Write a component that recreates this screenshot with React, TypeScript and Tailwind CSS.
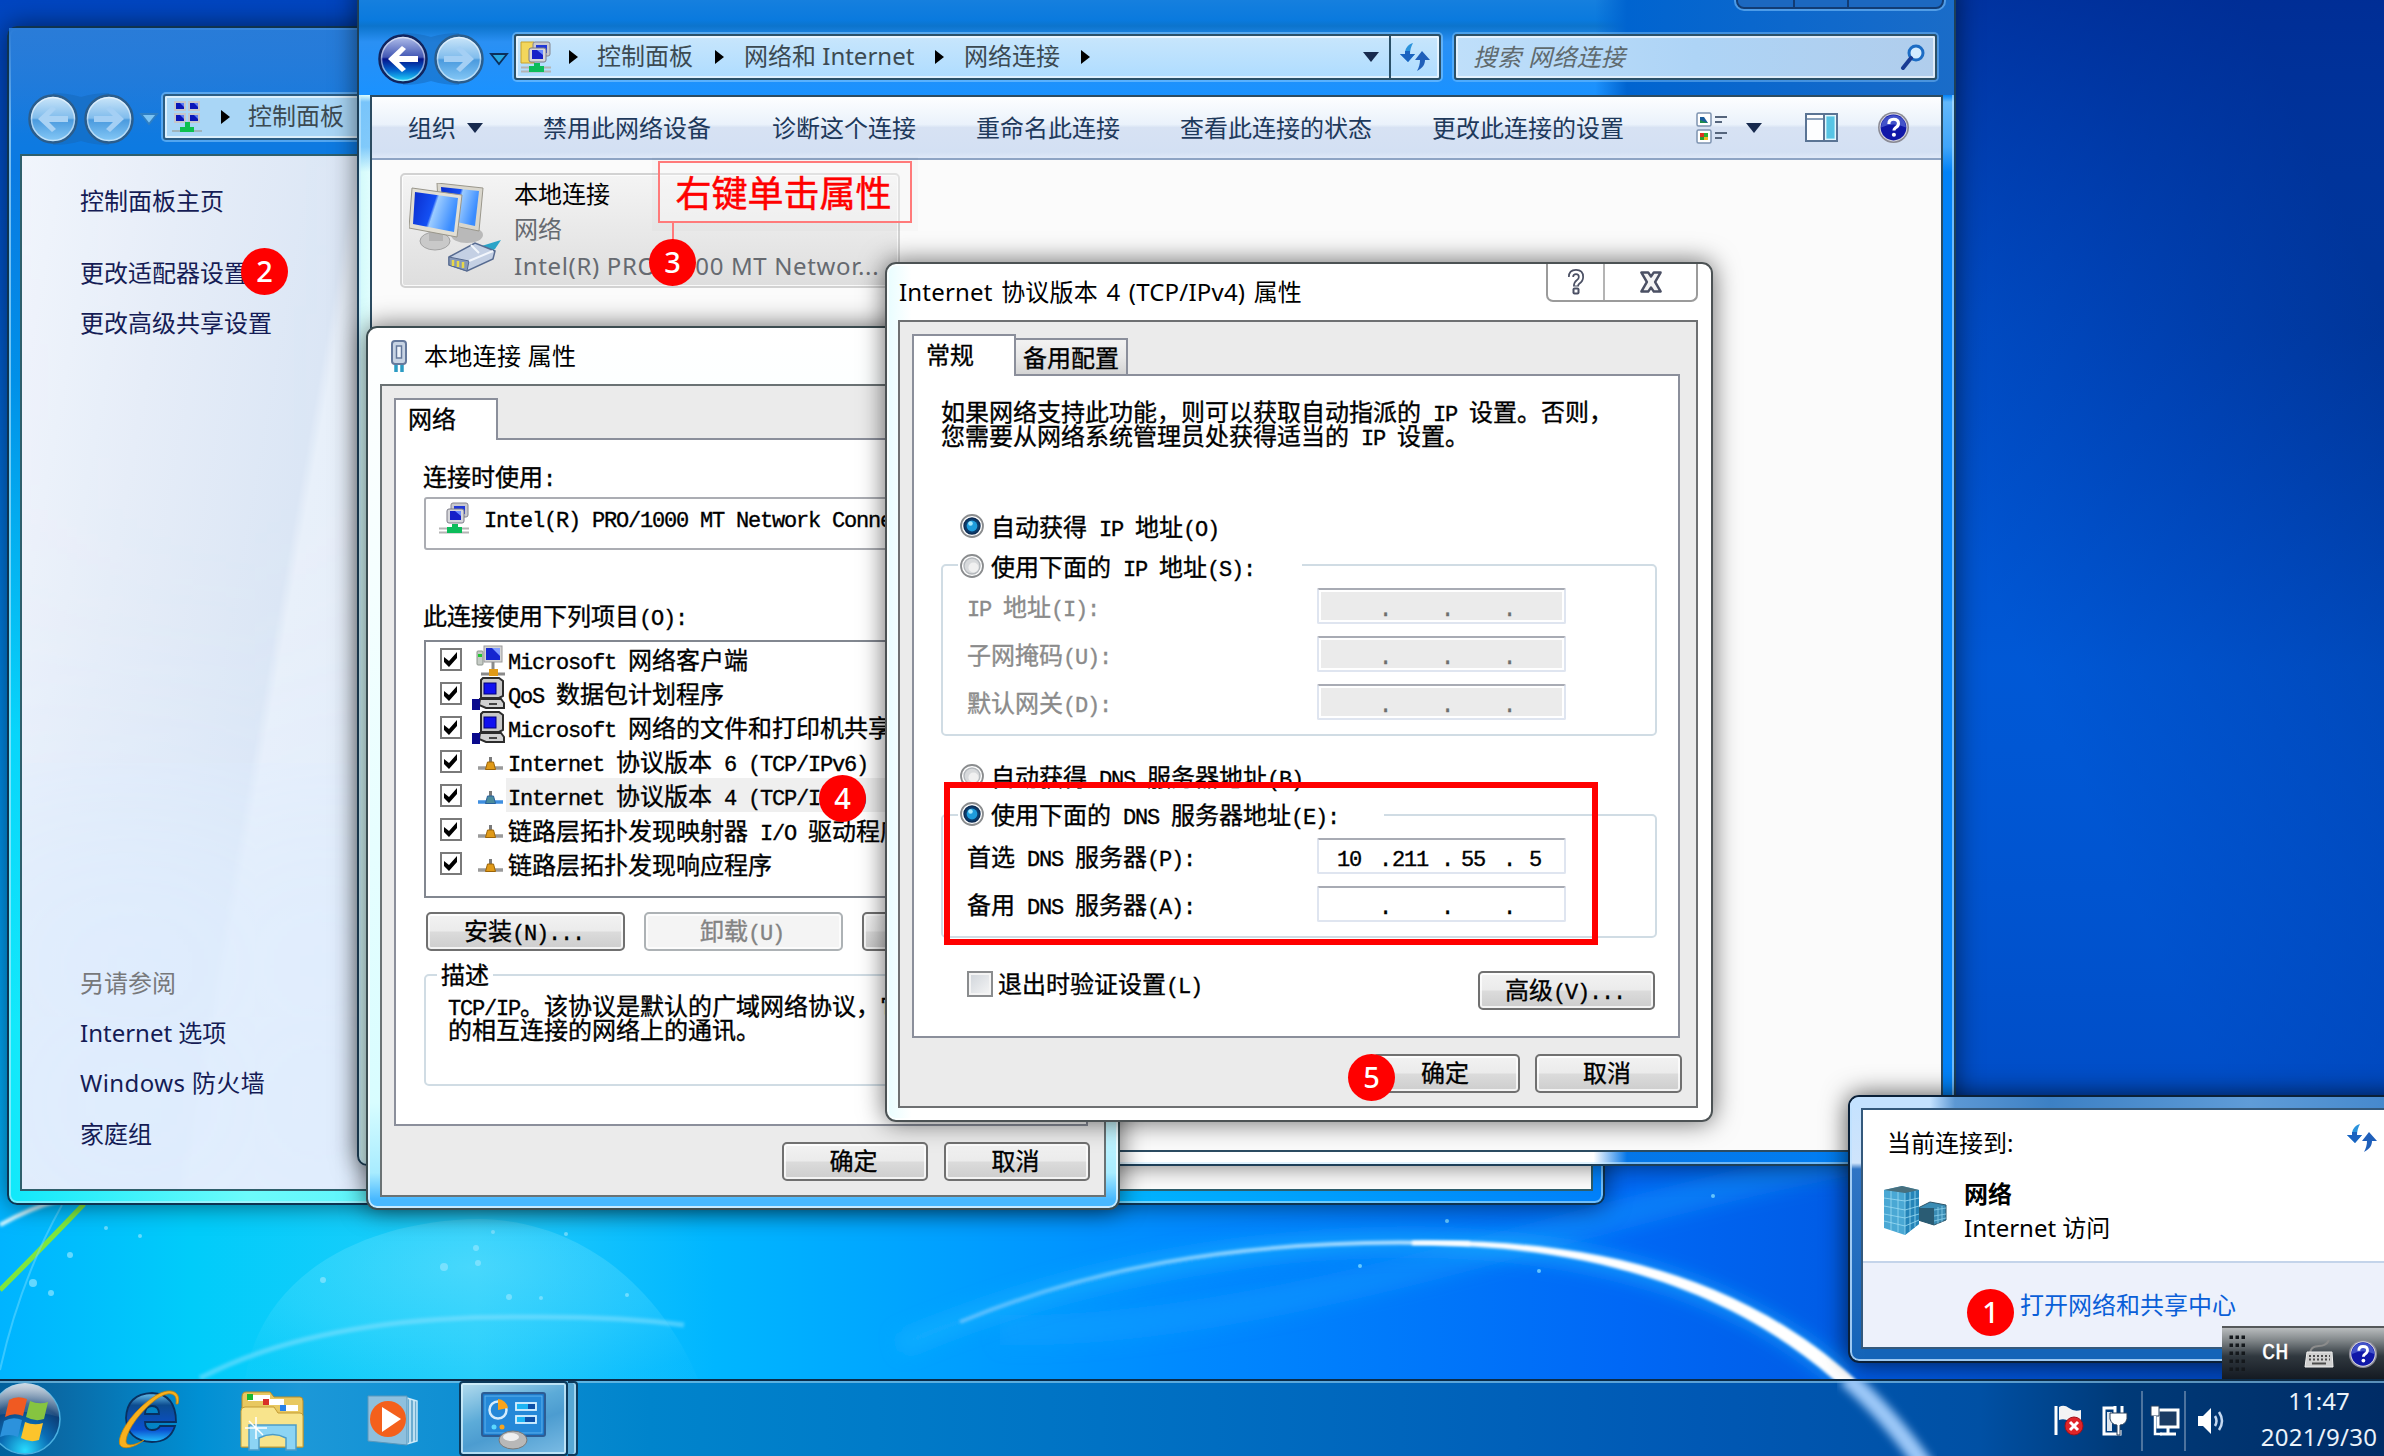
import React from "react";

const UI = "font-['Noto_Sans','Noto_Sans_CJK_SC',sans-serif]";

/* Dialog text: full-width glyphs take 24px, half-width glyphs take 12px. */
function Song({ children, className = "" }: { children: string; className?: string }) {
  const parts = children.split(/([\x20-\x7e]+)/).filter(Boolean);
  return (
    <span className={"whitespace-pre font-['Noto_Sans_CJK_SC',sans-serif] text-[24px] leading-[24px] [-webkit-text-stroke:0.35px_currentColor] " + className}>
      {parts.map((p, i) =>
        /^[\x20-\x7e]+$/.test(p) ? (
          <span key={i} className="font-['Liberation_Mono',monospace] text-[22px] leading-[12px] tracking-[-1.2px]">
            {p}
          </span>
        ) : (
          <React.Fragment key={i}>{p}</React.Fragment>
        )
      )}
    </span>
  );
}

function Wallpaper() {
  const dots = [
    [70, 1255, 3], [33, 1283, 4], [51, 1293, 3], [444, 1267, 4], [476, 1248, 3], [478, 1263, 3], [323, 1280, 3], [509, 1297, 3],
    [541, 1298, 2], [566, 1234, 2], [627, 1295, 2], [493, 1232, 2], [1447, 1221, 2], [1713, 1196, 2], [1539, 1271, 2], [1360, 1266, 2],
    [140, 1236, 2], [106, 1228, 2],
  ];
  return (
    <svg className="absolute inset-0" width="2384" height="1456" viewBox="0 0 2384 1456">
      <defs>
        <linearGradient id="wl" x1="0" y1="0" x2="1" y2="0">
          <stop offset="0" stopColor="#00b4ff" />
          <stop offset="0.08" stopColor="#00ccfa" />
          <stop offset="0.2" stopColor="#22cdfb" />
          <stop offset="0.3" stopColor="#00b6ff" />
          <stop offset="0.5" stopColor="#0089ff" />
          <stop offset="0.68" stopColor="#0068f6" />
          <stop offset="0.8" stopColor="#0058e0" />
          <stop offset="1" stopColor="#003fae" />
        </linearGradient>
        <linearGradient id="wt" x1="0" y1="0" x2="0" y2="1">
          <stop offset="0" stopColor="#0045c0" />
          <stop offset="0.2" stopColor="#004cc8" stopOpacity="0.9" />
          <stop offset="0.5" stopColor="#0058d0" stopOpacity="0.45" />
          <stop offset="0.8" stopColor="#0060d8" stopOpacity="0" />
        </linearGradient>
        <linearGradient id="wr" x1="1950" y1="500" x2="2384" y2="300" gradientUnits="userSpaceOnUse">
          <stop offset="0" stopColor="#0054d0" />
          <stop offset="0.5" stopColor="#0042b2" />
          <stop offset="1" stopColor="#003290" />
        </linearGradient>
        <linearGradient id="wrb" x1="0" y1="0" x2="0" y2="1">
          <stop offset="0" stopColor="#002c98" stopOpacity="0.7" />
          <stop offset="0.3" stopColor="#0040b8" stopOpacity="0.2" />
          <stop offset="0.6" stopColor="#0060e0" stopOpacity="0.35" />
          <stop offset="1" stopColor="#0048c0" stopOpacity="0.6" />
        </linearGradient>
        <linearGradient id="arc" x1="1040" y1="0" x2="1560" y2="0" gradientUnits="userSpaceOnUse">
          <stop offset="0" stopColor="#5cc0ff" />
          <stop offset="0.7" stopColor="#b8e2ff" />
          <stop offset="1" stopColor="#ffffff" />
        </linearGradient>
        <radialGradient id="bub" cx="0.5" cy="0.3" r="0.75">
          <stop offset="0" stopColor="#a0f0ff" stopOpacity="0.3" />
          <stop offset="0.6" stopColor="#70e4ff" stopOpacity="0.22" />
          <stop offset="1" stopColor="#60d8ff" stopOpacity="0.05" />
        </radialGradient>
        <filter id="b8" x="-20%" y="-20%" width="140%" height="140%"><feGaussianBlur stdDeviation="9" /></filter>
        <filter id="b2" x="-20%" y="-20%" width="140%" height="140%"><feGaussianBlur stdDeviation="1.4" /></filter>
      </defs>
      <rect width="2384" height="1456" fill="url(#wl)" />
      <rect width="2384" height="1456" fill="url(#wt)" />
      <rect x="1940" width="444" height="1110" fill="url(#wr)" />
      <rect x="1940" width="444" height="1110" fill="url(#wrb)" />
      <path d="M245 1379C262 1270 370 1220 480 1219C600 1222 670 1310 698 1379Z" fill="url(#bub)" />
      <path d="M200 1378Q320 1316 520 1317Q620 1316 684 1325" stroke="#8fe4ff" strokeOpacity="0.5" strokeWidth="5" fill="none" filter="url(#b2)" />
      <path d="M0 1290Q45 1245 84 1204" stroke="#7fe63c" strokeWidth="5" fill="none" />
      <path d="M0 1225Q30 1208 60 1200" stroke="#d8f8ff" strokeWidth="4" fill="none" filter="url(#b2)" />
      <path d="M0 1370Q20 1280 62 1205" stroke="#70dcff" strokeOpacity="0.5" strokeWidth="2" fill="none" />
      <path d="M1000 1330C1200 1335 1450 1260 1600 1220S1800 1170 1900 1150" stroke="#20a8ff" strokeOpacity="0.35" strokeWidth="30" fill="none" filter="url(#b8)" />
      <path d="M900 1345C1100 1260 1290 1242 1412 1242C1570 1243 1725 1276 1844 1378" stroke="#20b4ff" strokeOpacity="0.6" strokeWidth="20" fill="none" filter="url(#b8)" />
      <path d="M960 1322C1090 1268 1230 1243 1400 1242.500L1470 1243.500" stroke="url(#arc)" strokeWidth="4" fill="none" filter="url(#b2)" />
      <path d="M1412 1241C1570 1238 1730 1266 1854 1378L1920 1456H1898L1834 1380C1720 1280 1570 1244 1412 1245Z" fill="#fff" filter="url(#b2)" />
      {dots.map(([x, y, r], i) => (
        <circle key={i} cx={x} cy={y} r={r} fill="#8fe6ff" fillOpacity="0.7" />
      ))}
    </svg>
  );
}

function NavButtons({ active, id }: { active?: boolean; id: string }) {
  const circle = (cx: number, on: boolean) => (
    <g>
      <circle cx={cx} cy="27" r="23.5" fill={on ? "url(#" + id + "on)" : "url(#" + id + "off)"} stroke={on ? "#10245e" : "#2b5d8c"} strokeWidth="2.5" />
      <circle cx={cx} cy="27" r="21.5" fill="none" stroke="#fff" strokeOpacity="0.5" strokeWidth="1.5" />
    </g>
  );
  return (
    <svg className="shrink-0" width="134" height="54" viewBox="0 0 134 54">
      <defs>
        <linearGradient id={id + "on"} x1="0" y1="0" x2="0" y2="1">
          <stop offset="0" stopColor="#b9c6ee" />
          <stop offset="0.46" stopColor="#4257b4" />
          <stop offset="0.5" stopColor="#04148a" />
          <stop offset="0.75" stopColor="#0468d0" />
          <stop offset="1" stopColor="#26e4ff" />
        </linearGradient>
        <linearGradient id={id + "off"} x1="0" y1="0" x2="0" y2="1">
          <stop offset="0" stopColor="#cfe8fa" />
          <stop offset="0.48" stopColor="#80bcec" />
          <stop offset="0.52" stopColor="#4a9ade" />
          <stop offset="1" stopColor="#8accf8" />
        </linearGradient>
      </defs>
      <path d="M27 1Q42 1 55 5Q68 1 83 1V53Q68 53 55 49Q42 53 27 53Z" fill="#1668b8" fillOpacity="0.5" />
      {circle(27, !!active)}
      {circle(83, false)}
      <path d="M12 27L26 14L30 17L23 24H42V30H23L30 37L26 40Z" fill={active ? "#fff" : "#a9d2f4"} />
      <path d="M98 27L84 14L80 17L87 24H68V30H87L80 37L84 40Z" fill="#a4cff4" />
      <path d="M115 22H131L123 32Z" fill={active ? "#28a8e0" : "#7cc4f4"} stroke={active ? "#0b2f5c" : "#2f7fc4"} strokeWidth="1.8" />
    </svg>
  );
}

function Arrow() {
  return (
    <svg className="shrink-0" width="9" height="14" viewBox="0 0 9 14">
      <path d="M0 0L9 7L0 14Z" fill="#000" />
    </svg>
  );
}

function Down({ className = "" }: { className?: string }) {
  return (
    <svg className={"shrink-0 " + className} width="16" height="10" viewBox="0 0 16 10">
      <path d="M0 0H16L8 10Z" fill="#172a4e" />
    </svg>
  );
}

function PcPair({ folder, size = 32 }: { folder?: boolean; size?: number }) {
  return (
    <svg className="shrink-0" width={size} height={size} viewBox="0 0 32 32">
      {folder && <path d="M1 1H14V22H1Z" fill="#f3d65c" stroke="#c9a22c" />}
      <rect x="13" y="1" width="17" height="14" rx="2" fill="#c9c9cf" stroke="#84848e" />
      <rect x="16" y="4" width="11" height="8" fill="#2038d8" />
      <rect x="9" y="7" width="17" height="14" rx="2" fill="#d6d6da" stroke="#7a7a86" />
      <rect x="12" y="9" width="11" height="9" fill="#1520c8" />
      <path d="M17 9H23V14Z" fill="#6c8cff" />
      <path d="M1 26.5H31M1 30.5H31" stroke="#b4b4b4" strokeWidth="2" />
      <path d="M14 22H20V25H24V31H9V25H14Z" fill="#0cbc5a" />
    </svg>
  );
}

function FourPc() {
  const pc = (x: number, y: number) => (
    <g>
      <rect x={x} y={y} width="10" height="8" fill="#0a16b8" stroke="#c4c6cc" strokeWidth="2" />
      <path d={`M${x + 5} ${y + 1}H${x + 9}V${y + 5}Z`} fill="#5d7cf4" />
    </g>
  );
  return (
    <svg className="shrink-0" width="30" height="32" viewBox="0 0 30 32">
      {pc(3, 1)}
      {pc(17, 1)}
      {pc(3, 13)}
      {pc(17, 13)}
      <path d="M0 30H30" stroke="#9fb4bc" strokeWidth="2" />
      <path d="M13 21H18V26H22V31H8V26H13Z" fill="#0cc04e" />
    </svg>
  );
}

function Refresh({ className = "" }: { className?: string }) {
  return (
    <svg className={"shrink-0 " + className} width="30" height="28" viewBox="0 0 30 28">
      <path d="M13 0C7 2 5 6 5 11H0L8 19L15 11H10C10 7 11 4 13 0Z" fill="#2a93dc" />
      <path d="M0 11L8 19L15 11H10V8H5V11Z" fill="#1b63c0" />
      <path d="M17 28C23 25 25 21 25 17H30L22 8L15 17H20C20 21 19 24 17 28Z" fill="#1f5fba" />
    </svg>
  );
}

function Help({ size }: { size: number }) {
  return (
    <svg className="shrink-0" width={size} height={size} viewBox="0 0 32 32">
      <circle cx="16" cy="16" r="15" fill="#8a8a94" />
      <circle cx="16" cy="16" r="13.5" fill="#d8d8e2" />
      <circle cx="16" cy="16" r="12.5" fill="#1018a8" />
      <path d="M4 16A12 12 0 0 1 28 16Q16 10 4 16Z" fill="#5a6cd8" fillOpacity="0.7" />
      <path d="M11.5 12.5Q11.5 8 16 8Q20.8 8 20.8 12Q20.8 14.5 18 16.2Q16.4 17.4 16.4 19" stroke="#fff" strokeWidth="3" fill="none" />
      <circle cx="16.4" cy="23" r="2" fill="#fff" />
    </svg>
  );
}

function ControlPanelWindow() {
  return (
    <div className="absolute left-[7px] top-[26px] flex h-[1179px] w-[1598px] flex-col rounded-[10px] border-2 border-[#0e3350] bg-[linear-gradient(to_bottom,#1f7adb_0,#0a7ae2_12%,#0090e8_30%,rgba(0,200,250,0.6)_60%,transparent_85%),linear-gradient(to_right,#10e8fa_0,#6cfbfb_15%,#48e8fc_35%,#00b4ff_70%,#0080fa_100%)] shadow-[inset_0_0_0_2px_rgba(200,240,255,0.55),0_0_26px_rgba(0,0,0,0.55)]">
      <div className="flex h-[126px] shrink-0 items-center bg-[radial-gradient(ellipse_at_0%_0%,#2a7cd8,transparent_60%)] pl-[17px] pt-[56px]">
        <NavButtons id="navA" />
        <div className="mb-[4px] ml-[3px] flex h-[46px] w-[1200px] items-center rounded-[3px] border-2 border-[#2a5c84] bg-[#a9d6f6] pl-[7px] shadow-[0_0_0_2px_rgba(150,210,255,0.5),inset_0_0_0_2px_rgba(255,255,255,0.6)]">
          <FourPc />
          <span className="w-[19px]" />
          <Arrow />
          <span className="-mt-[2px] ml-[18px] whitespace-nowrap text-[24px] leading-[30px] text-[#3c4a52]">控制面板</span>
        </div>
      </div>
      <div className="ml-[11px] flex h-[1037px] w-[1573px] border-2 border-[#2f5f6c] bg-white">
        <div className="flex h-full w-[360px] flex-col whitespace-nowrap bg-[linear-gradient(100deg,#f2f5fc_0,#e6edf8_30%,#dbe6f5_62%,#e9f0fa_64%,#e2ebf8_100%)] pl-[58px] text-[24px] leading-[30px] text-[#151c55] shadow-[inset_0_-500px_300px_-100px_#dfedfe]">
          <p className="mt-[30px]">控制面板主页</p>
          <p className="mt-[42px]">更改适配器设置</p>
          <p className="mt-[20px]">更改高级共享设置</p>
          <p className="mt-[630px] text-[#77787a]">另请参阅</p>
          <p className="mt-[20px]">Internet 选项</p>
          <p className="mt-[20px] tracking-[0.4px]">Windows 防火墙</p>
          <p className="mt-[21px]">家庭组</p>
        </div>
      </div>
    </div>
  );
}

function ConnectionIcon() {
  return (
    <svg className="shrink-0" width="96" height="92" viewBox="0 0 96 92">
      <defs>
        <linearGradient id="scr" x1="0" y1="0" x2="1" y2="0.3">
          <stop offset="0" stopColor="#0a2ccc" />
          <stop offset="0.5" stopColor="#1450f4" />
          <stop offset="0.56" stopColor="#9cccff" />
          <stop offset="1" stopColor="#3a8cff" />
        </linearGradient>
      </defs>
      <ellipse cx="58" cy="52" rx="16" ry="8" fill="#b9b9b9" />
      <path d="M28 0L74 5L70 48L30 40Z" fill="#d9d6cc" stroke="#9a978c" />
      <path d="M32 4L70 8L66 43L34 36Z" fill="url(#scr)" />
      <ellipse cx="26" cy="58" rx="15" ry="9" fill="#c9c9c9" stroke="#a2a2a2" />
      <path d="M20 46H34V58H20Z" fill="#b4b4b4" />
      <path d="M3 5L53 12L48 54L0 45Z" fill="#e2dfd4" stroke="#98958a" />
      <path d="M6 9L49 15L45 49L4 41Z" fill="url(#scr)" />
      <path d="M66 65L92 57L86 66L76 72Z" fill="#2ba4c8" />
      <path d="M40 74L66 60L86 68L84 76L58 88L40 82Z" fill="#c4d0e4" stroke="#566a90" strokeWidth="1.5" />
      <path d="M40 74L60 78L58 88L40 82Z" fill="#8698b8" stroke="#566a90" />
      <path d="M44 77V83M49 78V84M54 79V85" stroke="#e8d848" strokeWidth="2.5" />
      <path d="M60 78L84 68M62 62L70 70" stroke="#f2f6fc" strokeWidth="2" />
    </svg>
  );
}

function Crumb({ children, className }: { children: string; className: string }) {
  return <span className={"-mt-[2px] shrink-0 whitespace-nowrap text-[24px] leading-[30px] text-[#3c4a52] " + className}>{children}</span>;
}

function NetworkWindow() {
  return (
    <div className="absolute left-[357px] top-[-20px] flex h-[1186px] w-[1599px] flex-col rounded-[10px] border-2 border-[#1d3f58] bg-[linear-gradient(to_bottom,transparent_0,transparent_113px,rgba(110,190,250,0.9)_120px,rgba(90,180,250,0.7)_165px,transparent_190px),linear-gradient(to_right,#d2fafa_0,#e6ffff_1%,#ffffff_40%,#ffffff_77.4%,#0476e8_79.5%,#0082f8_100%)] shadow-[inset_0_0_0_2px_rgba(200,235,255,0.55),0_0_26px_rgba(0,0,0,0.55)]">
      <div className="flex h-[113px] shrink-0 items-center bg-[linear-gradient(to_right,transparent_77.5%,#0064d0_79.5%,#1a6cc8_100%),linear-gradient(to_bottom,#2084de_0,#0a7ade_38px,#0c74cc_44px,#2a90f4_60px,#1a92ff_113px)] pl-[17px] pt-[41px]">
        <NavButtons active id="navB" />
        <div className="mb-[4px] ml-[4px] flex h-[46px] w-[927px] shrink-0 items-center rounded-[3px] border-2 border-[#2a5068] bg-[linear-gradient(to_bottom,#c8e6fc,#aedcff)] pl-[4px] shadow-[0_0_0_2px_rgba(150,210,255,0.5),inset_0_0_0_2px_rgba(255,255,255,0.6)]">
          <PcPair folder />
          <span className="w-[17px] shrink-0" />
          <Arrow />
          <Crumb className="ml-[19px] w-[97px]">控制面板</Crumb>
          <span className="w-[21px] shrink-0" />
          <Arrow />
          <Crumb className="ml-[20px] w-[170px]">网络和 Internet</Crumb>
          <span className="w-[21px] shrink-0" />
          <Arrow />
          <Crumb className="ml-[20px] w-[97px]">网络连接</Crumb>
          <span className="w-[20px] shrink-0" />
          <Arrow />
          <Down className="ml-auto mr-[10px]" />
          <div className="flex h-full w-[50px] shrink-0 items-center justify-center border-l-2 border-[#2a5068]">
            <Refresh />
          </div>
        </div>
        <div className="mb-[4px] ml-[13px] flex h-[46px] w-[483px] shrink-0 items-center rounded-[3px] border-2 border-[#2a5068] bg-[linear-gradient(to_right,#bfdffa,#aed4f6_50%,#b0cdec)] pl-[17px] pr-[9px] shadow-[0_0_0_2px_rgba(150,210,255,0.4),inset_0_0_0_2px_rgba(255,255,255,0.6)]">
          <span className="text-[24px] italic leading-[30px] tracking-[0.3px] text-[#5f6a6e]">搜索 网络连接</span>
          <svg className="ml-auto" width="26" height="26" viewBox="0 0 26 26">
            <circle cx="16" cy="9" r="7" fill="#d4ecff" stroke="#1c6cc4" strokeWidth="3" />
            <path d="M11 14L3 24" stroke="#1a3c94" strokeWidth="4" strokeLinecap="round" />
          </svg>
        </div>
      </div>
      <div className="ml-[11px] flex h-[1057px] w-[1573px] flex-col border-2 border-[#2c4c62] bg-[#fbfbfb]">
        <div className="flex h-[63px] shrink-0 items-center whitespace-nowrap border-b-2 border-[#8ea4c4] bg-[linear-gradient(to_bottom,#fdfeff_0,#eaf2fb_45%,#d7e2f3_50%,#d3e0f3_90%,#dfe9f8_100%)] pl-[36px] text-[24px] leading-[30px] text-[#1e395b]">
          <span className="w-[48px]">组织</span>
          <Down className="ml-[11px]" />
          <span className="ml-[60px] w-[168px]">禁用此网络设备</span>
          <span className="ml-[61px] w-[144px]">诊断这个连接</span>
          <span className="ml-[60px] w-[144px]">重命名此连接</span>
          <span className="ml-[60px] w-[192px]">查看此连接的状态</span>
          <span className="ml-[60px] w-[192px]">更改此连接的设置</span>
          <svg className="ml-[72px] shrink-0" width="32" height="32" viewBox="0 0 32 32">
            <rect x="1" y="1" width="14" height="13" rx="1.5" fill="#fff" stroke="#7d93b0" strokeWidth="1.5" />
            <path d="M4 5H8L12 11H4Z" fill="#1a5c9c" />
            <path d="M4 8L12 11H4Z" fill="#1c8c4c" />
            <rect x="1" y="18" width="14" height="13" rx="1.5" fill="#fff" stroke="#7d93b0" strokeWidth="1.5" />
            <path d="M4 21H8V25H4Z" fill="#e03020" />
            <path d="M8 21H12V25H8Z" fill="#30b030" />
            <path d="M4 25H8V28H4Z" fill="#2c9c2c" />
            <path d="M8 25H12V28H8Z" fill="#f0b820" />
            <path d="M19 5H31M19 10H26M19 21H31M19 26H26" stroke="#55657c" strokeWidth="2" />
          </svg>
          <Down className="ml-[18px]" />
          <svg className="ml-[43px] shrink-0" width="33" height="29" viewBox="0 0 33 29">
            <rect x="1" y="1" width="31" height="27" fill="#fdfeff" stroke="#5a7494" strokeWidth="2" />
            <path d="M2 6H19" stroke="#8aa0ba" strokeWidth="2" />
            <path d="M19 1V28" stroke="#5a7494" strokeWidth="2" />
            <rect x="21" y="3" width="9" height="23" fill="#57c4e4" stroke="#c8f0fa" />
          </svg>
          <span className="w-[39px] shrink-0" />
          <Help size={33} />
        </div>
        <div className="ml-[28px] mt-[13px] flex h-[115px] w-[500px] shrink-0 rounded-[5px] border-2 border-[#d2d2d2] bg-[linear-gradient(to_bottom,#f4f4f4,#dedede)] pl-[7px] shadow-[inset_0_0_0_1px_rgba(255,255,255,0.8)]">
          <div className="pt-[8px]">
            <ConnectionIcon />
          </div>
          <div className="flex flex-col whitespace-nowrap pl-[9px] pt-[2px] text-[24px] text-[#666a70]">
            <span className="leading-[34px] text-black">本地连接</span>
            <span className="leading-[36px]">网络</span>
            <span className="leading-[37px] tracking-[0.65px]">Intel(R) PRO/1000 MT Networ...</span>
          </div>
        </div>
      </div>
      <div className="absolute left-[1377px] top-[10px] flex h-[17px] w-[208px] rounded-b-[8px] border-2 border-[#123c74] bg-[#1c68c0] shadow-[0_0_0_2px_rgba(120,190,250,0.6)]">
        <div className="w-[57px] border-r-2 border-[#123c74]" />
        <div className="w-[54px] border-r-2 border-[#123c74]" />
      </div>
    </div>
  );
}

function Button({ children, className, disabled }: { children: string; className: string; disabled?: boolean }) {
  return (
    <div
      className={
        "flex h-[39px] shrink-0 items-center justify-center rounded-[5px] border-2 pr-[3px] shadow-[inset_0_0_0_2px_rgba(255,255,255,0.75)] " +
        (disabled
          ? "border-[#adb2b5] bg-[#f4f4f4] text-[#838383] "
          : "border-[#707070] bg-[linear-gradient(to_bottom,#f2f2f2_0,#ebebeb_48%,#dbdbdb_52%,#cdcdcd_100%)] text-black ") +
        className
      }
    >
      <Song className="-mt-[3px]">{children}</Song>
    </div>
  );
}

function CheckedBox() {
  return (
    <svg className="shrink-0" width="22" height="23" viewBox="0 0 22 23">
      <rect x="1" y="1" width="20" height="21" fill="#fff" stroke="#7a7a7a" strokeWidth="2" />
      <path d="M4 9L9 13L17 4V10L9 19L4 14Z" fill="#000" />
    </svg>
  );
}

function ItemIcon({ kind }: { kind: string }) {
  if (kind === "client")
    return (
      <svg className="mt-[3px] shrink-0" width="32" height="32" viewBox="0 0 32 32">
        <rect x="4" y="6" width="6" height="14" rx="1" fill="#c6ccc6" stroke="#8c948c" />
        <rect x="5" y="9" width="4" height="3" fill="#20c830" />
        <rect x="11" y="1" width="18" height="16" fill="#d4d4d4" stroke="#9a9a9a" />
        <rect x="13" y="3" width="14" height="12" fill="#1426d0" />
        <path d="M19 3H27V11Z" fill="#7f9cff" />
        <path d="M20 17V25M8 29H32" stroke="#8a8a8a" strokeWidth="3" />
        <rect x="16" y="24" width="9" height="7" fill="#e09a18" />
      </svg>
    );
  if (kind === "service")
    return (
      <svg className="mt-[2px] shrink-0" width="34" height="34" viewBox="0 0 34 34">
        <path d="M11 1H27L31 4V19L27 21H9V3Z" fill="#c8c8c8" stroke="#2c2c2c" strokeWidth="2" />
        <rect x="12" y="6" width="12" height="11" fill="#1010f0" stroke="#000078" />
        <path d="M8 22H29L32 26V31H14L7 28Z" fill="#d2d2d2" stroke="#2c2c2c" strokeWidth="2" />
        <path d="M17 27H25" stroke="#444" strokeWidth="2" />
        <rect x="0" y="22" width="8" height="11" fill="#0a0a8c" />
      </svg>
    );
  const blue = kind === "blue";
  return (
    <svg className="ml-[4px] mt-[3px] shrink-0" width="30" height="30" viewBox="0 0 30 30">
      <path d="M2 20H27" stroke={blue ? "#3f8fe0" : "#9a9a9a"} strokeWidth="3.500" />
      <path d="M14.500 9V16" stroke="#7a7a7a" strokeWidth="3" />
      <path d="M11.500 14H17.500L19.500 21.500H9.500Z" fill={blue ? "#4a8c9c" : "#e09a18"} stroke={blue ? "#28609c" : "#9c6408"} />
    </svg>
  );
}

const items = [
  { t: "Microsoft 网络客户端", k: "client" },
  { t: "QoS 数据包计划程序", k: "service" },
  { t: "Microsoft 网络的文件和打印机共享", k: "service" },
  { t: "Internet 协议版本 6 (TCP/IPv6)", k: "plain" },
  { t: "Internet 协议版本 4 (TCP/IPv4)", k: "blue" },
  { t: "链路层拓扑发现映射器 I/O 驱动程序", k: "plain" },
  { t: "链路层拓扑发现响应程序", k: "plain" },
];

function ConnectionDialog() {
  return (
    <div className="absolute left-[366px] top-[326px] flex h-[884px] w-[754px] flex-col rounded-[11px] border-2 border-[#3c4c50] bg-[linear-gradient(to_bottom,#ffffff_0,#f4ffff_30%,#d8fdff_88%,#a8ecff_96%,#48b8ff_99%)] shadow-[inset_0_0_0_2px_rgba(255,255,255,0.7),0_0_26px_rgba(0,0,0,0.6)]">
      <div className="flex h-[56px] shrink-0 items-center pl-[22px]">
        <svg width="18" height="34" viewBox="0 0 18 34">
          <path d="M6 25V33M12 25V33" stroke="#2b9cc4" strokeWidth="3.500" />
          <rect x="2" y="2" width="14" height="23" rx="3" fill="#c8d4e4" stroke="#65799c" strokeWidth="2" />
          <rect x="6.500" y="7" width="5" height="12" fill="#eef3fa" stroke="#65799c" strokeWidth="1.5" />
        </svg>
        <span className="ml-[16px] whitespace-nowrap text-[24px] leading-[30px] tracking-[0.3px] text-black">本地连接 属性</span>
      </div>
      <div className="ml-[12px] flex h-[813px] w-[726px] shrink-0 flex-col border-2 border-[#6a7274] bg-[#ebebeb] pl-[12px] pt-[12px]">
        <div className="relative z-10 -mb-[2px] flex h-[42px] w-[104px] shrink-0 items-center border-2 border-b-0 border-[#8b8f9b] bg-white pb-[4px] pl-[12px]">
          <Song>网络</Song>
        </div>
        <div className="flex h-[688px] w-[694px] shrink-0 flex-col border-2 border-[#8b8f9b] bg-white pl-[28px] pt-[24px]">
          <Song className="-ml-[1px] block h-[24px] shrink-0">连接时使用:</Song>
          <div className="mt-[9px] flex h-[53px] w-[640px] shrink-0 rounded-[3px] border-2 border-[#abadb3] pl-[12px] pt-[3px]">
            <PcPair />
            <Song className="ml-[14px] mt-[3px]">Intel(R) PRO/1000 MT Network Connection</Song>
          </div>
          <Song className="-ml-[1px] mt-[53px] block h-[25px] shrink-0">此连接使用下列项目(O):</Song>
          <div className="mt-[12px] flex h-[258px] w-[640px] shrink-0 flex-col border-2 border-[#828790]">
            {items.map((it) => (
              <div key={it.t} className="flex h-[34.1px] shrink-0 items-center pl-[14px]">
                <CheckedBox />
                <div className="ml-[10px] flex w-[34px] shrink-0 justify-center">
                  <ItemIcon kind={it.k} />
                </div>
                <div className={"flex h-full w-[500px] items-center pl-[2px] " + (it.k === "blue" ? "bg-[#efefef]" : "")}>
                  <Song>{it.t}</Song>
                </div>
              </div>
            ))}
          </div>
          <div className="ml-[2px] mt-[14px] flex shrink-0 gap-[19px]">
            <Button className="w-[199px]">安装(N)...</Button>
            <Button className="w-[199px]" disabled>卸载(U)</Button>
            <Button className="w-[199px]">属性(R)</Button>
          </div>
          <div className="relative mt-[23px] h-[112px] w-[640px] shrink-0 rounded-[5px] border-2 border-[#d0dce4] pl-[22px] pt-[17px]">
            <div className="absolute left-[11px] top-[-14px] flex bg-white px-[4px]">
              <Song>描述</Song>
            </div>
            <Song className="block h-[24.4px]">TCP/IP。该协议是默认的广域网络协议，它提供在不同</Song>
            <Song className="block h-[24.4px]">的相互连接的网络上的通讯。</Song>
          </div>
        </div>
        <div className="mt-[16px] flex justify-end gap-[16px] pr-[14px]">
          <Button className="w-[146px]">确定</Button>
          <Button className="w-[146px]">取消</Button>
        </div>
      </div>
    </div>
  );
}

function Radio({ on, children, className = "" }: { on?: boolean; children: string; className?: string }) {
  return (
    <div className={"flex h-[24px] shrink-0 items-center gap-[7px] " + className}>
      <svg className="shrink-0" width="24" height="24" viewBox="0 0 24 24">
        <circle cx="12" cy="12" r="11" fill="#fff" stroke="#8a8c8e" strokeWidth="1.8" />
        <circle cx="12" cy="12" r="8" fill={on ? "#0c3c6c" : "#d8dadc"} stroke={on ? "#0c2c54" : "#b4b8bc"} strokeWidth="1.4" />
        {on ? <circle cx="12" cy="12" r="5.4" fill="#1e9cdc" /> : <circle cx="13.5" cy="13.5" r="5" fill="#f0f0f0" />}
        {on && <circle cx="10.5" cy="9.5" r="2.3" fill="#a4e8ff" />}
      </svg>
      <Song className="-mt-[1px]">{children}</Song>
    </div>
  );
}

function IpRow({ label, value = ["", "", "", ""], disabled }: { label: string; value?: string[]; disabled?: boolean }) {
  return (
    <div className="flex h-[36px] shrink-0 items-center">
      <Song className={"-mt-[1px] w-[350px] " + (disabled ? "text-[#8b8b8b]" : "text-black")}>{label}</Song>
      <div
        className={
          "flex h-[36px] w-[249px] items-center rounded-[2px] border-2 border-[#dfe5f0] border-t-[#a8abb4] shadow-[inset_0_0_0_2px_#fff] " +
          (disabled ? "bg-[#ebebeb] text-[#6d6d6d]" : "bg-white text-black")
        }
      >
        <Song className="w-[60px] text-center">{value[0]}</Song>
        <Song>.</Song>
        <Song className="w-[50px] pr-[12px] text-center">{value[1]}</Song>
        <Song>.</Song>
        <Song className="w-[50px] pr-[10px] text-center">{value[2]}</Song>
        <Song>.</Song>
        <Song className="w-[40px] text-center">{value[3]}</Song>
      </div>
    </div>
  );
}

function Ipv4Dialog() {
  return (
    <div className="absolute left-[885px] top-[262px] flex h-[860px] w-[828px] flex-col rounded-[11px] border-2 border-[#4c5254] bg-[linear-gradient(to_right,#e8fdff_0,#ffffff_3%,#ffffff_100%)] shadow-[inset_0_0_0_2px_rgba(255,255,255,0.7),0_0_26px_rgba(0,0,0,0.6)]">
      <div className="flex h-[56px] shrink-0 items-center pl-[12px]">
        <span className="whitespace-nowrap text-[24px] leading-[30px] tracking-[0.2px] text-black [word-spacing:2px]">Internet 协议版本 4 (TCP/IPv4) 属性</span>
        <div className="ml-auto mr-[13px] flex h-[38px] w-[152px] self-start rounded-b-[7px] border-2 border-t-0 border-[#9b9b9b] bg-white">
          <div className="flex w-[57px] items-center justify-center border-r-2 border-[#b4b4b4]">
            <svg width="18" height="26" viewBox="0 0 18 26">
              <path d="M4 8Q4 3 9 3Q14 3 14 8Q14 11 11 13Q9 14.500 9 17.500" stroke="#4b5064" strokeWidth="6" fill="none" />
              <rect x="5.500" y="18.500" width="7" height="7" rx="2" fill="#4b5064" />
              <path d="M4 8Q4 3 9 3Q14 3 14 8Q14 11 11 13Q9 14.500 9 16.500" stroke="#fff" strokeWidth="2.600" fill="none" />
              <rect x="7.500" y="20.500" width="3" height="3" fill="#fff" />
            </svg>
          </div>
          <div className="flex flex-1 items-center justify-center">
            <svg width="22" height="22" viewBox="0 0 24 22" preserveAspectRatio="none">
              <path d="M1.500 1.500H9L12 5.500L15 1.500H22.500L16.500 11L22.500 20.500H15L12 16.500L9 20.500H1.500L7.500 11Z" fill="#f4f4f4" stroke="#4b5064" strokeWidth="2.600" strokeLinejoin="round" />
            </svg>
          </div>
        </div>
      </div>
      <div className="ml-[11px] flex h-[788px] w-[800px] shrink-0 flex-col border-2 border-[#6e7072] bg-[#ebebeb] pl-[12px] pt-[12px]">
        <div className="relative z-10 -mb-[2px] flex h-[42px] shrink-0">
          <div className="flex h-[42px] w-[104px] items-center border-2 border-b-0 border-[#8b8f9b] bg-white pb-[5px] pl-[12px]">
            <Song>常规</Song>
          </div>
          <div className="mt-[4px] flex h-[36px] w-[112px] items-center justify-center border-2 border-b-0 border-l-0 border-[#8b8f9b] bg-[linear-gradient(to_bottom,#f2f2f2_0,#e8e8e8_50%,#d4d4d4_100%)]">
            <Song>备用配置</Song>
          </div>
        </div>
        <div className="flex h-[664px] w-[768px] shrink-0 flex-col border-2 border-[#8b8f9b] bg-white pl-[27px] pt-[23px]">
          <Song className="block h-[24px] shrink-0">如果网络支持此功能，则可以获取自动指派的 IP 设置。否则，</Song>
          <Song className="block h-[24px] shrink-0">您需要从网络系统管理员处获得适当的 IP 设置。</Song>
          <Radio on className="ml-[19px] mt-[67px]">自动获得 IP 地址(O)</Radio>
          <div className="relative mt-[26px] flex h-[172px] w-[716px] shrink-0 flex-col gap-[12px] rounded-[5px] border-2 border-[#d0dce4] pl-[24px] pt-[22px]">
            <div className="absolute left-[15px] top-[-12px] w-[344px] bg-white pl-[2px]">
              <Radio>使用下面的 IP 地址(S):</Radio>
            </div>
            <IpRow label="IP 地址(I):" disabled />
            <IpRow label="子网掩码(U):" disabled />
            <IpRow label="默认网关(D):" disabled />
          </div>
          <Radio className="ml-[19px] mt-[28px]">自动获得 DNS 服务器地址(B)</Radio>
          <div className="relative mt-[26px] flex h-[124px] w-[716px] shrink-0 flex-col gap-[12px] rounded-[5px] border-2 border-[#d0dce4] pl-[24px] pt-[22px]">
            <div className="absolute left-[15px] top-[-14px] w-[426px] bg-white pl-[2px]">
              <Radio on>使用下面的 DNS 服务器地址(E):</Radio>
            </div>
            <IpRow label="首选 DNS 服务器(P):" value={["10", "211", "55", "5"]} />
            <IpRow label="备用 DNS 服务器(A):" />
          </div>
          <div className="mt-[33px] flex h-[39px] shrink-0 pl-[26px] pr-[23px]">
            <div className="h-[26px] w-[26px] shrink-0 border-2 border-[#8a8c8e] bg-[linear-gradient(135deg,#cfd4da,#f6f6f6)] shadow-[inset_0_0_0_2px_#f4f4f4]" />
            <Song className="ml-[5px]">退出时验证设置(L)</Song>
            <Button className="ml-auto w-[177px]">高级(V)...</Button>
          </div>
        </div>
        <div className="mt-[16px] flex justify-end gap-[15px] pr-[14px]">
          <Button className="w-[147px]">确定</Button>
          <Button className="w-[147px]">取消</Button>
        </div>
      </div>
    </div>
  );
}

function NetworkFlyout() {
  return (
    <div className="absolute left-[1848px] top-[1095px] h-[268px] w-[600px] rounded-[11px] border-2 border-[#0a2038] bg-[linear-gradient(to_right,transparent_14px,#1464b8_15px),linear-gradient(to_bottom,#c4e2ff_0,#cfe4fb_66px,#2f74c4_72px,#1464b8_100%)] shadow-[inset_0_0_0_2px_rgba(190,225,255,0.8),0_0_26px_rgba(0,0,0,0.7)]">
      <div className="h-[11px] rounded-tl-[9px] bg-[linear-gradient(to_right,#c4e2ff_0,#c4e2ff_80px,#5c98d4_105px,#3c80c4_200px,#5f9cd8_400px,#3a80c8_100%)]" />
      <div className="ml-[11px] flex h-[241px] flex-col border-2 border-[#34597c] bg-[#edf1fb]">
        <div className="flex h-[153px] shrink-0 flex-col border-b-2 border-[#c4d4ea] bg-white pl-[24px]">
          <div className="flex pt-[14px]">
            <span className="mt-[4px] w-[460px] shrink-0 whitespace-nowrap text-[24px] leading-[30px] text-black">当前连接到:</span>
            <Refresh />
          </div>
          <div className="-ml-[3px] flex pt-[18px]">
            <svg className="mt-[10px] shrink-0" width="64" height="50" viewBox="0 0 64 50">
              <path d="M34 22L46 16L62 19V34L50 39L34 34Z" fill="#3a8cb4" stroke="#2c5468" />
              <path d="M34 22V34L50 39L50 22Z" fill="#2a5c74" />
              <path d="M50 24L62 22M50 30L62 28M50 35L62 32M54 21V38M58 20V36" stroke="#8cd0ec" strokeWidth="0.8" />
              <path d="M0 4L18 0L35 4V38L21 49L0 42Z" fill="#4aa8d4" />
              <path d="M21 6L35 4V38L21 49Z" fill="#2484b8" />
              <path d="M0 4L18 0L35 4L21 7Z" fill="#48707e" />
              <path d="M0 12L21 15L35 12M0 20L21 24L35 20M0 28L21 32L35 28M0 35L21 40L35 34M7 5V44M14 6V46M21 7V49M26 6V45M31 5V41" stroke="#9cdcf4" strokeWidth="0.8" fill="none" />
            </svg>
            <div className="flex flex-col whitespace-nowrap pl-[16px] text-[24px] text-black">
              <span className="font-bold leading-[35px]">网络</span>
              <span className="leading-[34px]">Internet 访问</span>
            </div>
          </div>
        </div>
        <span className="ml-[157px] mt-[27px] whitespace-nowrap text-[24px] leading-[30px] text-[#0a5fd8]">打开网络和共享中心</span>
      </div>
    </div>
  );
}

function LanguageBar() {
  const dots = [0, 1, 2, 3, 4].flatMap((r) => [0, 1, 2].map((c) => [c * 6 + 2, r * 8 + 3]));
  return (
    <div className="absolute left-[2222px] top-[1326px] flex h-[53px] w-[170px] items-center border-t-2 border-[#55585a] bg-[linear-gradient(to_bottom,#b9bcbe_0,#7f8588_25%,#30383f_55%,#141a22_100%)] pl-[7px]">
      <svg width="18" height="40" viewBox="0 0 18 40">
        {dots.map(([x, y], i) => (
          <rect key={i} x={x - 1.5} y={y - 1.5} width="3.5" height="3.5" fill="#14181c" />
        ))}
      </svg>
      <span className="ml-[15px] w-[29px] whitespace-nowrap font-['Liberation_Mono',monospace] text-[22px] leading-[30px] text-white [-webkit-text-stroke:0.4px_#fff]">CH</span>
      <svg className="ml-[13px]" width="30" height="30" viewBox="0 0 30 30">
        <path d="M6 14C8 2 20 12 25 1" stroke="#8c8c8c" strokeWidth="2" fill="none" />
        <path d="M3 13H28L29 28H1Z" fill="#d0d0d0" stroke="#f0f0f0" />
        <path d="M5 17H26M5 20.500H26" stroke="#4c4c4c" strokeWidth="2" strokeDasharray="2 2" />
        <path d="M8 24.500H22" stroke="#4c4c4c" strokeWidth="2" />
      </svg>
      <span className="w-[14px] shrink-0" />
      <Help size={30} />
    </div>
  );
}

function Taskbar() {
  return (
    <div className="absolute left-0 top-[1379px] flex h-[77px] w-full border-t-2 border-[#0b2b48] bg-[linear-gradient(to_right,#00609c_0,#0a6aa6_60px,#0090d4_200px,#1c98d8_300px,#0084cc_650px,#0072c4_1100px,#0058b4_1700px,#0050a4_1980px,#003a78_2120px,#002c66_2384px)] shadow-[inset_0_2px_0_rgba(150,210,240,0.6)]">
      <svg className="absolute left-0 top-0" width="2384" height="75" viewBox="0 0 2384 75">
        <defs><filter id="tb"><feGaussianBlur stdDeviation="4" /></filter></defs>
        <path d="M1846 -4Q1890 34 1928 90" stroke="#9cc8f8" strokeWidth="18" fill="none" filter="url(#tb)" />
      </svg>
      <svg className="relative shrink-0" width="64" height="75" viewBox="0 0 64 75">
        <defs>
          <radialGradient id="orb" cx="0.5" cy="0.95" r="0.9">
            <stop offset="0" stopColor="#28dcff" />
            <stop offset="0.4" stopColor="#0a6cb4" />
            <stop offset="0.75" stopColor="#0c3c74" />
            <stop offset="1" stopColor="#8aa4bc" />
          </radialGradient>
          <linearGradient id="orbt" x1="0" y1="0" x2="0" y2="1">
            <stop offset="0" stopColor="#d8dfe8" stopOpacity="0.95" />
            <stop offset="1" stopColor="#5a7c9c" stopOpacity="0.2" />
          </linearGradient>
        </defs>
        <circle cx="25" cy="38" r="35" fill="url(#orb)" stroke="#4ab0e0" strokeWidth="1.500" />
        <path d="M-9 36A34 34 0 0 1 59 36Q25 26 -9 36Z" fill="url(#orbt)" />
        <path d="M9 19Q17 14 27 18L23 35Q14 31 5 36Z" fill="#f05a22" />
        <path d="M30 20Q39 24 48 21L44 38Q35 41 26 36Z" fill="#86c440" />
        <path d="M4 40Q13 35 22 39L18 56Q9 52 0 56Z" fill="#2c92dc" />
        <path d="M25 41Q34 45 43 42L39 59Q30 62 21 57Z" fill="#fcc42c" />
      </svg>
      <svg className="relative ml-[52px] mt-[5px] shrink-0" width="66" height="64" viewBox="0 0 66 64">
        <defs>
          <linearGradient id="ie" x1="0" y1="0" x2="0" y2="1">
            <stop offset="0" stopColor="#6cc4ee" />
            <stop offset="0.25" stopColor="#0c4c90" />
            <stop offset="0.75" stopColor="#0a50d0" />
            <stop offset="1" stopColor="#24c4ff" />
          </linearGradient>
        </defs>
        <path fillRule="evenodd" d="M60 36H29Q29 44 36 44Q42 44 44 40H59Q54 56 36 56Q11 55 10 32Q11 8 36 7Q60 8 60 36ZM29 28H43Q43 20 36 20Q29 20 29 28Z" fill="url(#ie)" stroke="#083060" strokeWidth="1.800" />
        <path d="M62 18C66 4 52 0 36 12C16 26 0 50 4 59C7 64 18 62 28 54C20 59 11 61 10 56C10 46 22 28 38 15C52 4 62 6 60 18Z" fill="#f8b01c" stroke="#c88408" strokeWidth="0.800" />
      </svg>
      <svg className="relative ml-[58px] mt-[10px] shrink-0" width="64" height="60" viewBox="0 0 64 60">
        <path d="M2 6Q2 1 6 1H30L34 6H60Q63 6 63 10V56H2Z" fill="#e8c860" stroke="#b88c28" />
        <path d="M8 4H30V10H8Z" fill="#fff" />
        <path d="M7 3H13V9H7Z" fill="#18b830" />
        <path d="M24 8H44V14H24Z" fill="#fff" />
        <path d="M23 8H29V14H23Z" fill="#d83028" />
        <path d="M40 14H58V20H40Z" fill="#fff" />
        <path d="M40 14H46V20H40Z" fill="#2880e8" />
        <path d="M1 20Q1 16 5 16H34L38 22H60Q63 22 63 25V56H1Z" fill="#f8e48c" stroke="#c49c34" />
        <path d="M9 34H56V59H46V47Q33 40 19 47V59H9Z" fill="#8cd4f4" stroke="#4c9cc8" strokeWidth="1.500" />
        <path d="M16 26V48M5 37H27M9 30L23 44" stroke="#fff" strokeWidth="1.500" />
      </svg>
      <svg className="relative ml-[63px] mt-[14px] shrink-0" width="58" height="52" viewBox="0 0 58 52">
        <path d="M40 3L50 6V46L40 49Z" fill="#6cacd0" stroke="#c8e8f8" strokeWidth="1.500" />
        <path d="M1 1H40V50L1 46Z" fill="#8ec0de" stroke="#5a98bc" />
        <path d="M43 4V48M47 5V47" stroke="#d8f0fc" strokeWidth="1.500" />
        <circle cx="21" cy="24" r="18" fill="#f4601c" />
        <path d="M15 12L34 24L15 37Z" fill="#fff" />
      </svg>
      <div className="relative ml-[34px] flex h-[75px] shrink-0">
        <div className="flex h-[75px] w-[109px] items-center justify-center rounded-[4px] border-2 border-[#0c3a5c] bg-[linear-gradient(160deg,#b4dcee_0,#5cabd8_40%,#4c9cd0_60%,#7cbce4_100%)] shadow-[inset_0_0_0_2px_rgba(220,245,255,0.7)]">
          <svg className="mt-[4px]" width="66" height="58" viewBox="0 0 66 58">
            <rect x="1" y="1" width="63" height="43" rx="2" fill="#1c78c8" stroke="#2c5c94" strokeWidth="2" />
            <rect x="4" y="4" width="57" height="37" fill="#2488d8" stroke="#5cb4f0" />
            <circle cx="17" cy="18" r="8.500" fill="none" stroke="#d4ecfc" strokeWidth="2.500" />
            <path d="M17 18V7A11 11 0 0 1 27 16Z" fill="#f8a41c" />
            <rect x="35" y="11" width="20" height="7" fill="#1cb4f4" stroke="#d8f0ff" strokeWidth="1.800" />
            <rect x="35" y="24" width="20" height="7" fill="#1cb4f4" stroke="#d8f0ff" strokeWidth="1.800" />
            <path d="M47 12H54V17H47ZM44 25H54V30H44Z" fill="#0c50a8" />
            <circle cx="13" cy="35" r="2.500" fill="#5cd8ff" />
            <circle cx="21" cy="35" r="2.500" fill="#f8a41c" />
            <ellipse cx="32" cy="48" rx="14" ry="9" fill="#b8b8b8" stroke="#787878" />
            <ellipse cx="30" cy="45" rx="8" ry="4" fill="#f0f0f0" />
          </svg>
        </div>
        <div className="h-[75px] w-[10px] rounded-r-[4px] border-2 border-l-0 border-[#0c3a5c] bg-[#58a8d4] shadow-[inset_-2px_0_0_rgba(190,230,250,0.7)]" />
      </div>
      <div className="relative ml-auto flex h-full items-center pt-[4px]">
        <svg width="30" height="34" viewBox="0 0 30 34">
          <path d="M2 2V31" stroke="#fff" strokeWidth="3" />
          <path d="M5 3Q10 0 15 4Q20 8 27 6V19Q20 21 15 17Q10 14 5 16Z" fill="#f4f4f4" />
          <circle cx="20" cy="22" r="9" fill="#e02428" stroke="#a01018" />
          <path d="M16 18L24 26M24 18L16 26" stroke="#fff" strokeWidth="3" />
        </svg>
        <svg className="ml-[16px]" width="28" height="34" viewBox="0 0 28 34">
          <path d="M14 4H4V30H20V26" fill="none" stroke="#fff" strokeWidth="3" />
          <path d="M7 8H12V27H7Z" fill="#dfe6ee" />
          <path d="M15 2V9M22 2V9" stroke="#fff" strokeWidth="3" />
          <path d="M10 9H27V15Q25 21 20 21V31H17V21Q12 21 10 15Z" fill="#fff" stroke="#28405c" />
        </svg>
        <span className="ml-[13px] h-[60px] w-[2px] bg-white/30" />
        <svg className="ml-[6px]" width="32" height="34" viewBox="0 0 32 34">
          <rect x="9" y="6" width="20" height="17" fill="#1c3c64" stroke="#fff" strokeWidth="3" />
          <path d="M19 23V29M11 30H27" stroke="#fff" strokeWidth="3" />
          <path d="M2 2H10V12H2Z" fill="#fff" stroke="#28405c" />
          <path d="M6 12V30H13" stroke="#fff" strokeWidth="2.500" fill="none" />
        </svg>
        <span className="ml-[3px] h-[60px] w-[2px] bg-white/30" />
        <svg className="ml-[10px]" width="32" height="32" viewBox="0 0 32 32">
          <path d="M2 11H7L15 3V29L7 21H2Z" fill="#fff" />
          <path d="M19 11Q22 16 19 21M23 7Q29 16 23 25" stroke="#c4d8f0" strokeWidth="2.500" fill="none" />
        </svg>
        <div className="ml-[26px] flex w-[130px] flex-col items-center whitespace-nowrap text-[24px] leading-[36px] text-[#eaf2fa]">
          <span className="-mt-[4px]">11:47</span>
          <span className="tracking-[0.3px]">2021/9/30</span>
        </div>
      </div>
    </div>
  );
}

function Badge({ n, className }: { n: number; className: string }) {
  return (
    <div className={"absolute flex h-[47px] w-[47px] items-center justify-center rounded-full bg-[#ff0000] pb-[2px] text-[29px] font-medium leading-none text-white " + className}>
      {n}
    </div>
  );
}

export default function App() {
  return (
    <div className={"relative h-[1456px] w-[2384px] overflow-hidden bg-[#0060e0] " + UI}>
      <Wallpaper />
      <ControlPanelWindow />
      <NetworkWindow />
      <ConnectionDialog />
      <Ipv4Dialog />
      <NetworkFlyout />
      <Taskbar />
      <LanguageBar />
      <div className="absolute left-[658px] top-[161px] flex h-[62px] w-[254px] items-center justify-center whitespace-nowrap border-2 border-[#ff7a7a] bg-[#f7f7f7]/40 pr-[3px] pt-[4px] text-[36px] leading-none text-[#ff0000] shadow-[0_2px_0_6px_rgba(0,0,0,0.015)] [-webkit-text-stroke:0.5px_#ff0000]">
        右键单击属性
      </div>
      <div className="absolute left-[672px] top-[223px] h-[18px] w-[2px] bg-[#ff7a7a]" />
      <div className="absolute left-[944px] top-[782px] h-[163px] w-[654px] border-[6px] border-[#ff0000]" />
      <Badge n={1} className="left-[1967px] top-[1289px]" />
      <Badge n={2} className="left-[241px] top-[248px]" />
      <Badge n={3} className="left-[649px] top-[239px]" />
      <Badge n={4} className="left-[819px] top-[775px]" />
      <Badge n={5} className="left-[1348px] top-[1054px]" />
    </div>
  );
}
